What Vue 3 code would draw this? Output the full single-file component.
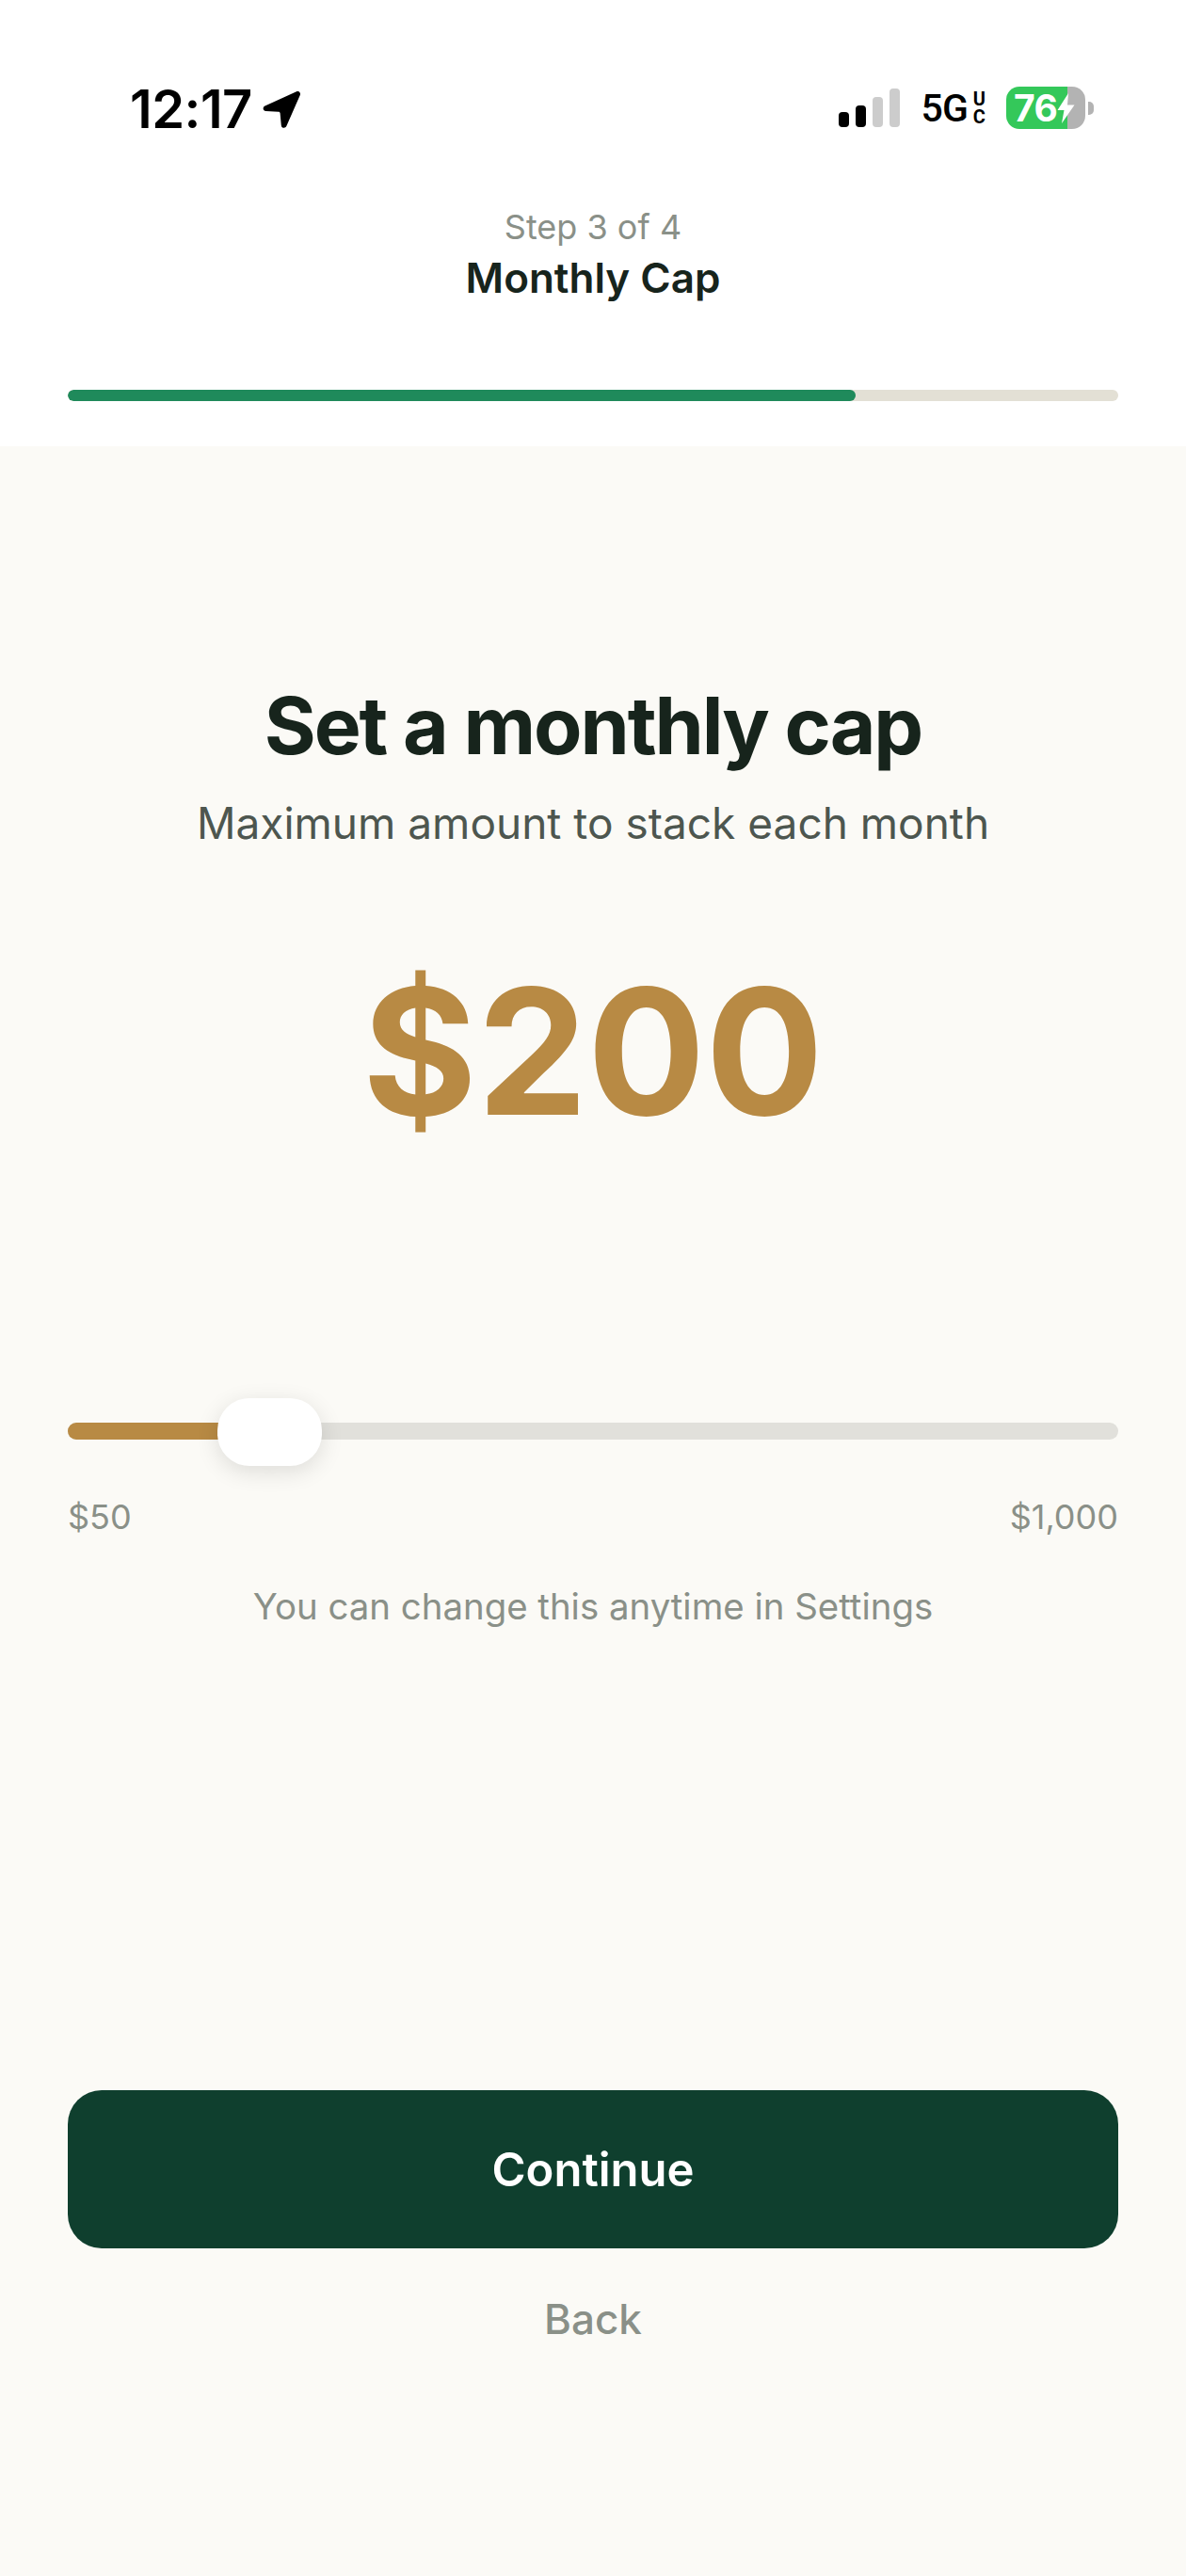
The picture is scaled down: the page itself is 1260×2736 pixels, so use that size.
<template>
  <div class="screen">
    <header class="top">
      <div class="status">
        <div class="status-left">
          <span class="clock">12:17</span>
          <svg class="arrow" viewBox="0 0 42 42" width="42" height="42">
            <path d="M37 2.200 3.500 17.500c-2.900 1.300-2.200 5.300 1 5.500l13.500.7c.9 0 1.500.7 1.600 1.500l1.200 13c.3 3 4.300 3.600 5.500.9L40.800 6c1-2.500-1.400-4.900-3.800-3.800z" fill="#000" />
          </svg>
        </div>
        <div class="status-right">
          <svg class="signal" viewBox="0 0 65 41" width="65" height="41">
            <rect x="0" y="25" width="11" height="16" rx="4" fill="#000" />
            <rect x="18" y="18" width="11" height="23" rx="4" fill="#000" />
            <rect x="36" y="9" width="11" height="32" rx="4" fill="#ccc" />
            <rect x="54" y="0" width="11" height="41" rx="4" fill="#ccc" />
          </svg>
          <div class="net">
            <span class="net-main">5G</span>
            <span class="net-uc"><span>U</span><span>C</span></span>
          </div>
          <div class="battery">
            <div class="battery-body">
              <span class="battery-num">76</span>
              <svg class="bolt" viewBox="0 0 18 32" width="19" height="32">
                <path d="M11.500 0 0 18h7L4.500 32 18 12.500h-7.500z" fill="#fff" />
              </svg>
            </div>
            <span class="battery-tip"></span>
          </div>
        </div>
      </div>
      <div class="step">Step {{ step }} of {{ total }}</div>
      <div class="title">Monthly Cap</div>
      <div class="progress">
        <div class="progress-fill" :style="{ width: (step / total) * 100 + '%' }"></div>
      </div>
    </header>

    <main class="body">
      <h1 class="heading">Set a monthly cap</h1>
      <p class="sub">Maximum amount to stack each month</p>
      <div class="amount">${{ amount }}</div>

      <div class="slider">
        <div class="track-fill"></div>
        <div class="thumb"></div>
      </div>
      <div class="range">
        <span>$50</span>
        <span>$1,000</span>
      </div>
      <p class="hint">You can change this anytime in Settings</p>

      <button class="continue">Continue</button>
      <button class="back">Back</button>
    </main>
  </div>
</template>

<script setup>
const step = 3
const total = 4
const amount = 200
</script>

<style>
html, body {
  margin: 0;
  background: #fbfaf6;
}
</style>

<style scoped>
.screen {
  width: 1260px;
  height: 2736px;
  display: flex;
  flex-direction: column;
  background: #fbfaf6;
  font-family: Inter, "Liberation Sans", sans-serif;
  overflow: hidden;
}

.top {
  height: 474px;
  box-sizing: border-box;
  background: #fff;
  padding: 0 72px;
  display: flex;
  flex-direction: column;
  align-items: center;
}

.status {
  width: 100%;
  height: 96px;
  margin-top: 68px;
  display: flex;
  justify-content: space-between;
  align-items: center;
  box-sizing: border-box;
  padding: 0 26px 0 66px;
}
.status-left {
  display: flex;
  align-items: center;
  gap: 10px;
}
.clock {
  font-size: 56px;
  font-weight: 600;
  color: #000;
  letter-spacing: -0.5px;
  line-height: 60px;
}
.status-right {
  display: flex;
  align-items: center;
  margin-bottom: 3px;
}
.signal {
  margin-right: 23px;
}
.net {
  display: flex;
  align-items: center;
  color: #000;
  margin-right: 22px;
}
.net-main {
  font-family: Roboto, sans-serif;
  font-size: 41px;
  font-weight: 500;
  letter-spacing: -1px;
}
.net-uc {
  display: flex;
  flex-direction: column;
  font-family: Roboto, sans-serif;
  font-size: 20px;
  font-weight: 700;
  line-height: 19px;
  margin-left: 6px;
  text-align: center;
}
.battery {
  display: flex;
  align-items: center;
}
.battery-body {
  width: 84px;
  height: 45px;
  border-radius: 14px;
  background: linear-gradient(90deg, #34c85a 0, #34c85a 77%, #b3b3b3 77%);
  display: flex;
  align-items: center;
  padding-left: 8px;
  box-sizing: border-box;
}
.battery-num {
  color: #fff;
  font-size: 39px;
  font-weight: 700;
  line-height: 45px;
  letter-spacing: -0.5px;
}
.battery-tip {
  width: 6px;
  height: 14px;
  margin-left: 3px;
  background: #b3b3b3;
  border-radius: 0 5px 5px 0;
}

.step {
  margin-top: 55px;
  font-size: 36px;
  line-height: 44px;
  color: #8a9088;
}
.title {
  margin-top: 5px;
  font-size: 44px;
  font-weight: 600;
  line-height: 54px;
  color: #17241c;
}
.progress {
  width: 100%;
  height: 12px;
  margin-top: 92px;
  border-radius: 6px;
  background: #e3e0d5;
  overflow: hidden;
}
.progress-fill {
  height: 100%;
  background: #1f8a5b;
  border-radius: 6px;
}

.body {
  flex: 1;
  display: flex;
  flex-direction: column;
  align-items: center;
  padding: 0 72px;
}
.heading {
  margin: 247px 0 0;
  font-size: 84px;
  font-weight: 700;
  line-height: 100px;
  letter-spacing: -2.100px;
  color: #17241c;
}
.sub {
  margin: 25px 0 0;
  font-size: 46px;
  line-height: 56px;
  color: #4d564f;
}
.amount {
  margin-top: 99px;
  font-size: 186px;
  font-weight: 700;
  line-height: 232px;
  color: #b88a44;
}

.slider {
  position: relative;
  width: 100%;
  height: 18px;
  margin-top: 278px;
  border-radius: 9px;
  background: #e1e0db;
}
.track-fill {
  width: 200px;
  height: 100%;
  border-radius: 9px 0 0 9px;
  background: #b88a44;
}
.thumb {
  position: absolute;
  left: 159px;
  top: -26px;
  width: 111px;
  height: 72px;
  border-radius: 34px;
  background: #fff;
  box-shadow: 0 6px 24px rgba(0, 0, 0, 0.12);
}
.range {
  width: 100%;
  display: flex;
  justify-content: space-between;
  margin-top: 60px;
  font-size: 36px;
  line-height: 44px;
  color: #8a9088;
}
.hint {
  margin: 51px 0 0;
  font-size: 38.400px;
  line-height: 44px;
  color: #8a9088;
}
.continue {
  width: 100%;
  height: 168px;
  margin-top: 492px;
  padding: 0;
  border: none;
  border-radius: 36px;
  background: #0f3f2e;
  color: #fff;
  font-family: inherit;
  font-size: 49px;
  font-weight: 600;
}
.back {
  margin-top: 47px;
  padding: 0;
  border: none;
  background: none;
  color: #8a9088;
  font-family: inherit;
  font-size: 44px;
  font-weight: 500;
  line-height: 56px;
}
</style>
